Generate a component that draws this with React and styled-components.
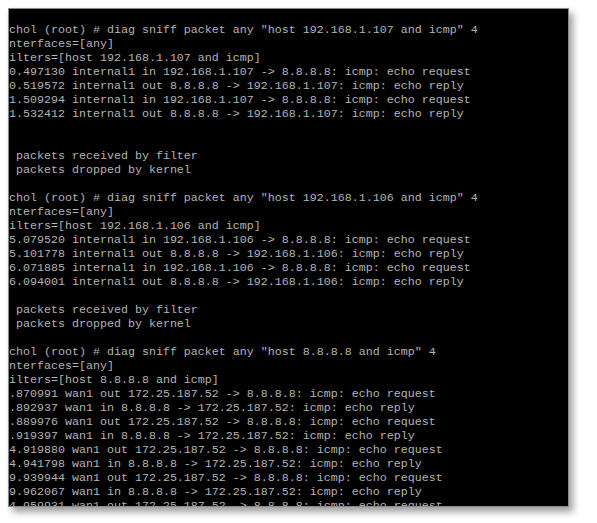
import React from "react";
import styled, { createGlobalStyle } from "styled-components";

const lines = [
  "echol (root) # diag sniff packet any \"host 192.168.1.107 and icmp\" 4",
  "interfaces=[any]",
  "filters=[host 192.168.1.107 and icmp]",
  "10.497130 internal1 in 192.168.1.107 -> 8.8.8.8: icmp: echo request",
  "10.519572 internal1 out 8.8.8.8 -> 192.168.1.107: icmp: echo reply",
  "11.509294 internal1 in 192.168.1.107 -> 8.8.8.8: icmp: echo request",
  "11.532412 internal1 out 8.8.8.8 -> 192.168.1.107: icmp: echo reply",
  "",
  "",
  "4 packets received by filter",
  "0 packets dropped by kernel",
  "",
  "echol (root) # diag sniff packet any \"host 192.168.1.106 and icmp\" 4",
  "interfaces=[any]",
  "filters=[host 192.168.1.106 and icmp]",
  "15.079520 internal1 in 192.168.1.106 -> 8.8.8.8: icmp: echo request",
  "15.101778 internal1 out 8.8.8.8 -> 192.168.1.106: icmp: echo reply",
  "16.071885 internal1 in 192.168.1.106 -> 8.8.8.8: icmp: echo request",
  "16.094001 internal1 out 8.8.8.8 -> 192.168.1.106: icmp: echo reply",
  "",
  "4 packets received by filter",
  "0 packets dropped by kernel",
  "",
  "echol (root) # diag sniff packet any \"host 8.8.8.8 and icmp\" 4",
  "interfaces=[any]",
  "filters=[host 8.8.8.8 and icmp]",
  "3.870991 wan1 out 172.25.187.52 -> 8.8.8.8: icmp: echo request",
  "3.892937 wan1 in 8.8.8.8 -> 172.25.187.52: icmp: echo reply",
  "8.889976 wan1 out 172.25.187.52 -> 8.8.8.8: icmp: echo request",
  "8.919397 wan1 in 8.8.8.8 -> 172.25.187.52: icmp: echo reply",
  "14.919880 wan1 out 172.25.187.52 -> 8.8.8.8: icmp: echo request",
  "14.941798 wan1 in 8.8.8.8 -> 172.25.187.52: icmp: echo reply",
  "19.939944 wan1 out 172.25.187.52 -> 8.8.8.8: icmp: echo request",
  "19.962067 wan1 in 8.8.8.8 -> 172.25.187.52: icmp: echo reply",
  "24.959931 wan1 out 172.25.187.52 -> 8.8.8.8: icmp: echo request",
];

export default function App() {
  return (
    <Page>
      <GlobalStyle />
      <Terminal>
        <Output>
          {lines.map((line, i) => (
            <Line key={i}>{line || " "}</Line>
          ))}
        </Output>
      </Terminal>
    </Page>
  );
}

const GlobalStyle = createGlobalStyle`
  html, body {
    margin: 0;
    padding: 0;
    background: #ffffff;
  }
`;

const Page = styled.div`
  width: 597px;
  height: 523px;
  padding: 8px 0 0 8px;
  box-sizing: border-box;
  background: #ffffff;
`;

const Terminal = styled.div`
  width: 561px;
  height: 499px;
  box-sizing: border-box;
  background: #000000;
  border: 1px solid #8a8a8a;
  box-shadow: 4px 5px 7px rgba(0, 0, 0, 0.38);
  overflow: hidden;
`;

const Output = styled.div`
  padding-top: 14px;
  margin-left: -7px;
  font-family: "Liberation Mono", "Courier New", monospace;
  font-size: 11.67px;
  line-height: 14px;
  color: #b4b4b4;
`;

const Line = styled.div`
  white-space: pre;
  height: 14px;
`;
